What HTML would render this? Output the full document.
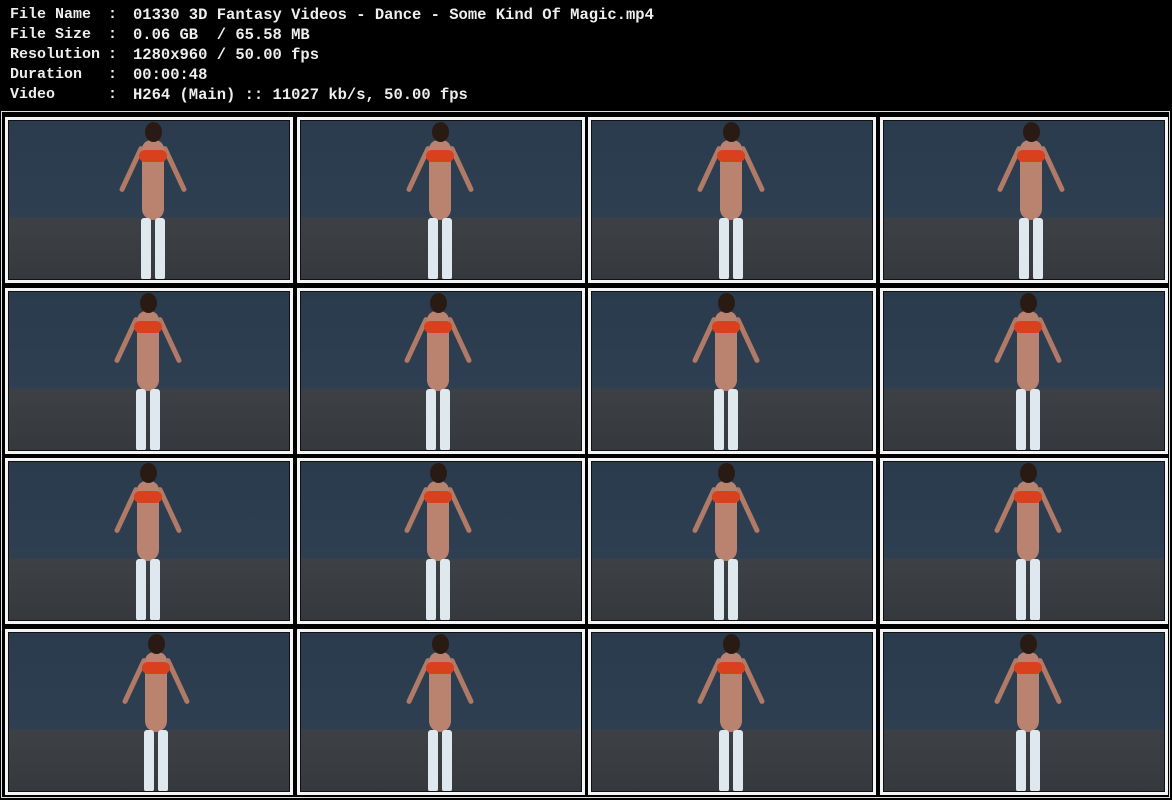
<!DOCTYPE html>
<html><head><meta charset="utf-8"><style>
html,body{margin:0;padding:0;background:#000;width:1172px;height:800px;overflow:hidden;position:relative}
.tx{position:absolute;color:#eee;font-family:"Liberation Mono",monospace;font-weight:bold;line-height:20px;white-space:pre}
.lb{left:10px;font-size:15px}
.co{left:108px;font-size:15px}
.va{left:133px;font-size:15.5px}
.outer{position:absolute;left:1px;top:111px;width:1167px;height:685px;border:1px solid #ddd}
.f{position:absolute;width:282px;height:160px;border:3px solid #f4f4f4;overflow:hidden;
background:linear-gradient(#2a3b4d 0%,#2e3f52 60%,#3d4145 62%,#35383c 100%)}
.f:after{content:"";position:absolute;left:0;top:0;right:0;bottom:0;border:1px solid #111}
.p{position:absolute;top:0;width:60px;height:160px;margin-left:-30px}
.h{position:absolute;left:22px;top:2px;width:17px;height:20px;border-radius:50%;background:#2a1a14}
.t{position:absolute;left:19px;top:20px;width:22px;height:80px;border-radius:10px 10px 12px 12px;background:#b98370}
.o{position:absolute;left:16px;top:30px;width:28px;height:12px;border-radius:6px;background:#d8401e}
.l{position:absolute;top:98px;width:10px;height:62px;background:#dfe8ee;border-radius:3px}
.a{position:absolute;top:24px;width:5px;height:50px;background:#b07a66;border-radius:3px}
</style></head><body>
<div class="tx lb" style="top:5px">File Name</div><div class="tx co" style="top:5px">:</div><div class="tx va" style="top:5px">01330 3D Fantasy Videos - Dance - Some Kind Of Magic.mp4</div>
<div class="tx lb" style="top:25px">File Size</div><div class="tx co" style="top:25px">:</div><div class="tx va" style="top:25px">0.06 GB  / 65.58 MB</div>
<div class="tx lb" style="top:45px">Resolution</div><div class="tx co" style="top:45px">:</div><div class="tx va" style="top:45px">1280x960 / 50.00 fps</div>
<div class="tx lb" style="top:65px">Duration</div><div class="tx co" style="top:65px">:</div><div class="tx va" style="top:65px">00:00:48</div>
<div class="tx lb" style="top:85px">Video</div><div class="tx co" style="top:85px">:</div><div class="tx va" style="top:85px">H264 (Main) :: 11027 kb/s, 50.00 fps</div>
<div class="outer"></div>
<div id="g"></div>
<script>
var xs=[5,297,588,880],ys=[117,288,458,629],cx=[145,140,140,148,140,138,135,145,140,138,135,145,148,140,140,145];
var h="";for(var r=0;r<4;r++)for(var c=0;c<4;c++){var i=r*4+c;
h+='<div class="f" style="left:'+xs[c]+'px;top:'+ys[r]+'px"><div class="p" style="left:'+cx[i]+'px"><div class="a" style="left:6px;transform:rotate(25deg)"></div><div class="a" style="left:49px;transform:rotate(-25deg)"></div><div class="t"></div><div class="o"></div><div class="h"></div><div class="l" style="left:18px"></div><div class="l" style="left:32px"></div></div></div>';}
document.getElementById("g").innerHTML=h;
</script>
</body></html>
